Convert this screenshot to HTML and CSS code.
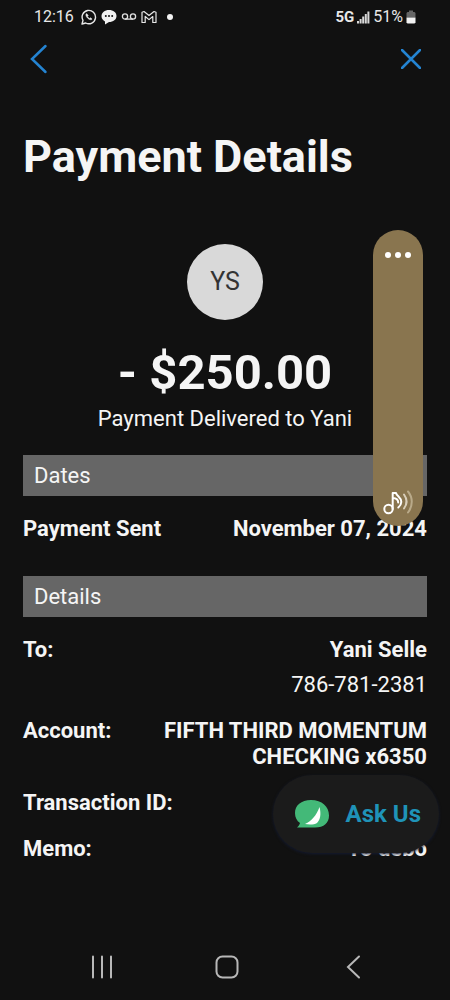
FILE: index.html
```html
<!DOCTYPE html>
<html lang="en">
<head>
<meta charset="utf-8">
<meta name="viewport" content="width=device-width, initial-scale=1">
<title>Payment Details</title>
<link rel="stylesheet" href="styles.css">
</head>
<body>
<div class="screen">
  <div class="status">
    <div class="status-group">
      <span class="clock">12:16</span>
      <svg width="16" height="16" viewBox="0 0 16 16" fill="none" stroke="#e8e8e8" stroke-width="1.4" stroke-linejoin="round"><path d="M1 15l1-3.600A6.700 6.700 0 1 1 4.700 14z"/><path d="M5.600 4.600C4.300 5.500 5 7.500 6.500 9s3.600 2.400 4.600 1.100l-1.600-1.300-1 .7C7.600 9 7 8.300 6.500 7.400l.7-.9z" fill="#e8e8e8" stroke-width=".6"/></svg>
      <svg width="16" height="16" viewBox="0 0 16 16"><path d="M8 1c4.300 0 7.500 2.500 7.500 6S12.300 13 8 13L4 15.600v-3.200C2 11.300.5 9.600.5 7.200.5 3.600 3.700 1 8 1z" fill="#f2f2f2"/><g fill="#111"><circle cx="4.800" cy="7" r="1"/><circle cx="8" cy="7" r="1"/><circle cx="11.200" cy="7" r="1"/></g></svg>
      <svg width="16" height="16" viewBox="0 0 16 16" fill="none" stroke="#e0e0e0" stroke-width="1.300"><circle cx="4" cy="7.500" r="2.600"/><circle cx="12" cy="7.500" r="2.600"/><path d="M4 10.100h8"/></svg>
      <svg width="16" height="16" viewBox="0 0 16 16" fill="none" stroke="#e8e8e8" stroke-width="1.200" stroke-linejoin="round"><path d="M1 3.200L3 2.500l5 4 5-4 2 .7v10.300h-3.200V7.500L8 10.600 4.200 7.500v6H1z"/></svg>
      <span class="dot"></span>
    </div>
    <div class="status-group status-right">
      <span class="network">5G</span>
      <svg width="13" height="14" viewBox="0 0 13 14" fill="#d8d8d8"><path d="M0 11h2v2.500H0zM2.600 9h2v4.500h-2zM5.200 6.500h2v7h-2zM7.800 4h2v9.500h-2zM10.400 1.500h2v12h-2z"/></svg>
      <span class="charge">51%</span>
      <svg width="10" height="14" viewBox="0 0 10 14"><path d="M3 .5h4V2h1.500L9.500 3v4.500h-9V3L1.500 2H3z" fill="#666"/><path d="M.5 7.500h9v5l-1 1h-7l-1-1z" fill="#f2f2f2"/></svg>
    </div>
  </div>

  <header class="toolbar">
    <button class="icon-button" aria-label="Back"><svg width="18" height="30" viewBox="0 0 18 30"><path d="M15.500 2L2 15l13.500 13"/></svg></button>
    <button class="icon-button" aria-label="Close"><svg width="20" height="20" viewBox="0 0 20 20"><path d="M1 1l18 18M19 1L1 19"/></svg></button>
  </header>

  <main class="content">
    <h1 class="title">Payment Details</h1>
    <section class="summary">
      <div class="avatar">YS</div>
      <p class="amount">- $250.00</p>
      <p class="caption">Payment Delivered to Yani</p>
    </section>

    <h2 class="section-heading">Dates</h2>
    <dl class="rows dates">
      <div class="row"><dt>Payment Sent</dt><dd>November 07, 2024</dd></div>
    </dl>

    <h2 class="section-heading">Details</h2>
    <dl class="rows">
      <div class="row"><dt>To:</dt><dd>Yani Selle<span class="phone">786-781-2381</span></dd></div>
      <div class="row"><dt>Account:</dt><dd class="account">FIFTH THIRD MOMENTUM CHECKING x6350</dd></div>
      <div class="row"><dt>Transaction ID:</dt><dd></dd></div>
      <div class="row"><dt>Memo:</dt><dd>Yo debo</dd></div>
    </dl>
  </main>

  <nav class="system-nav">
    <button class="nav-button" aria-label="Recent apps"><svg width="24" height="24" viewBox="0 0 24 24"><path d="M3 1.500v21M12 1.500v21M21 1.500v21"/></svg></button>
    <button class="nav-button" aria-label="Home"><svg width="24" height="24" viewBox="0 0 24 24"><rect x="1.500" y="1.500" width="21" height="21" rx="6"/></svg></button>
    <button class="nav-button" aria-label="System back"><svg width="24" height="24" viewBox="0 0 24 24"><path d="M18 1.500L7 12l11 10.500"/></svg></button>
  </nav>

  <aside class="volume" aria-label="Volume">
    <button class="volume-button" aria-label="More"><svg width="26" height="8" viewBox="0 0 26 8" fill="#fff"><circle cx="3" cy="4" r="3"/><circle cx="13" cy="4" r="3"/><circle cx="23" cy="4" r="3"/></svg></button>
    <button class="volume-button" aria-label="Sound"><svg width="30" height="26" viewBox="0 0 30 26" fill="none" stroke-width="2" stroke-linecap="round" stroke-linejoin="round"><g stroke="#fff"><circle cx="5.500" cy="20" r="4.200"/><path d="M9.700 20V4H13c.5 3 5.500 4.500 5.300 9-.1 2-1.200 4-3 5.500M9.700 9c3.300.2 5.500 1.500 5.500 4.500"/></g><path d="M21 5.500c3.300 4.500 3.300 9.500 0 14" stroke="#d9cfbb"/><path d="M25 2.500c5 6 5 14.500 0 21" stroke="#b9aa8a"/></svg></button>
  </aside>

  <button class="ask">
    <svg width="34" height="28" viewBox="0 0 34 28"><path d="M16 0C6 0 0 5.500 0 13c0 4.500 1.800 7.800 5 10-.5 2-1.500 3-3 4.500h18c9 0 14-4.500 14-12C34 6.500 27 0 16 0z" fill="#43b978"/><path d="M24.500 7c1.800 7 1 12.500-2.500 16-3 1.800-8 1.700-12 1C17 20.500 21 16 24.500 7z" fill="#fff"/></svg>
    <span>Ask Us</span>
  </button>
</div>
</body>
</html>
```

FILE: styles.css
```css
* {
  box-sizing: border-box;
}

body {
  margin: 0;
  background: #111;
  color: #f5f5f5;
  font-family: Roboto, "Liberation Sans", sans-serif;
  font-size: 22px;
  line-height: 26px;
}

button {
  display: flex;
  align-items: center;
  margin: 0;
  padding: 0;
  border: 0;
  background: none;
  color: inherit;
  font: inherit;
}

h1, h2, p, dl, dd {
  margin: 0;
}

svg {
  display: block;
  flex: none;
}

.screen {
  position: relative;
  display: flex;
  flex-direction: column;
  min-height: 100vh;
}

.status {
  display: flex;
  justify-content: space-between;
  padding: 4px 34px;
  color: #e8e8e8;
  font-size: 16px;
}

.status-group {
  display: flex;
  align-items: center;
  gap: 4px;
}

.clock {
  margin-right: 3px;
}

.dot {
  width: 6px;
  height: 6px;
  margin-left: 6px;
  border-radius: 50%;
  background: #f2f2f2;
}

.network {
  font-size: 15px;
  font-weight: 700;
}

.status-right {
  gap: 3px;
}

.toolbar {
  display: flex;
  align-items: center;
  justify-content: space-between;
  padding: 9px 29px 0 30px;
}

.icon-button {
  height: 32px;
  fill: none;
  stroke: #2484d2;
  stroke-width: 2.5;
  stroke-linecap: round;
}

.content {
  flex: 1;
  padding: 54px 23px 0;
}

.title {
  font-size: 45px;
  line-height: 56px;
}

.summary {
  display: flex;
  flex-direction: column;
  align-items: center;
  padding: 59px 0 23px;
}

.avatar {
  display: flex;
  align-items: center;
  justify-content: center;
  width: 76px;
  height: 76px;
  border-radius: 50%;
  background: #d9d9d9;
  color: #333;
  font-size: 25px;
}

.amount {
  padding-top: 20px;
  font-size: 49px;
  font-weight: 700;
  line-height: 66px;
}

.section-heading {
  padding: 8px 11px 7px;
  background: #666;
  font-size: 22px;
  font-weight: 400;
}

.rows {
  display: flex;
  flex-direction: column;
  gap: 20px;
  padding-top: 20px;
  font-weight: 700;
}

.dates {
  padding-bottom: 34px;
}

.row {
  display: flex;
  justify-content: space-between;
  gap: 24px;
}

.row dt {
  flex: none;
}

.row dd {
  text-align: right;
}

.account {
  max-width: 280px;
}

.phone {
  display: block;
  padding-top: 9px;
  font-weight: 400;
}

.system-nav {
  display: grid;
  grid-template-columns: repeat(3, 1fr);
  padding: 0 34px 21px 39px;
}

.nav-button {
  justify-content: center;
  fill: none;
  stroke: #b8b8b8;
  stroke-width: 2;
  stroke-linecap: round;
}

.volume {
  position: absolute;
  top: 230px;
  right: 27px;
  display: flex;
  flex-direction: column;
  align-items: center;
  justify-content: space-between;
  width: 50px;
  height: 296px;
  padding: 21px 0 11px;
  border-radius: 25px;
  background: #89754f;
}

.ask {
  position: absolute;
  top: 775px;
  right: 11px;
  gap: 17px;
  height: 78px;
  padding: 0 18px 0 22px;
  border-radius: 39px;
  background: #1b1b1b;
  box-shadow: 0 1px 3px #131a30;
  color: #1f93b8;
  font-size: 24px;
  font-weight: 700;
}
```
